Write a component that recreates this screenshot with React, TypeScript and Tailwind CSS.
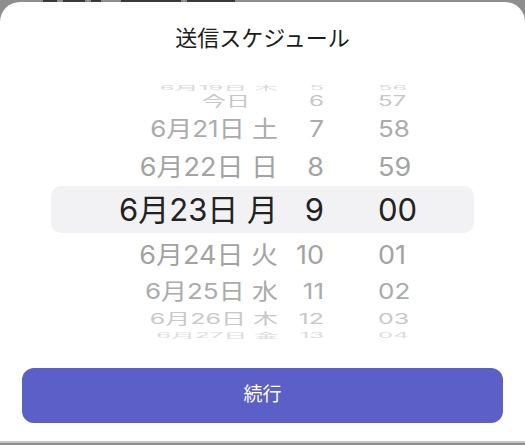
import React from 'react';

type Row = {
  date: string;
  hour: string;
  min: string;
  row: string;
  squash: string;
  datePad?: string;
};

const ROWS: Row[] = [
  { date: '6月19日 木', hour: '5', min: '56', row: 'h-[9px] text-[24px] text-[#dadada]', squash: 'scale-y-[0.25]' },
  { date: '今日', hour: '6', min: '57', row: 'h-[18px] text-[24px] text-[#c6c6c6]', squash: 'scale-y-[0.58]', datePad: 'pr-[28px]' },
  { date: '6月21日 土', hour: '7', min: '58', row: 'h-[38px] text-[26px] text-[#ababab]', squash: 'scale-y-[0.88]' },
  { date: '6月22日 日', hour: '8', min: '59', row: 'h-[38px] text-[27px] text-[#a3a3a3]', squash: 'scale-y-[0.93]' },
  { date: '6月23日 月', hour: '9', min: '00', row: 'h-[47px] text-[31px] text-[#222222] bg-[#f2f2f4] rounded-[10px]', squash: '' },
  { date: '6月24日 火', hour: '10', min: '01', row: 'h-[44px] text-[27px] text-[#a3a3a3]', squash: 'scale-y-[0.93]' },
  { date: '6月25日 水', hour: '11', min: '02', row: 'h-[28px] text-[26px] text-[#ababab]', squash: 'scale-y-[0.84]' },
  { date: '6月26日 木', hour: '12', min: '03', row: 'h-[26px] text-[25px] text-[#c8c8c8]', squash: 'scale-y-[0.6]' },
  { date: '6月27日 金', hour: '13', min: '04', row: 'h-[10px] text-[24px] text-[#dcdcdc]', squash: 'scale-y-[0.3]' },
];

function WheelRow({ r }: { r: Row }) {
  return (
    <div className={`mx-[51px] flex items-center overflow-hidden leading-none ${r.row}`}>
      <div className={`flex w-full items-center ${r.squash}`}>
        <span className={`w-[227px] text-right whitespace-pre ${r.datePad ?? ''}`}>{r.date}</span>
        <span className="w-[46px] text-right">{r.hour}</span>
        <span className="pl-[54px]">{r.min}</span>
      </div>
    </div>
  );
}

export default function App() {
  return (
    <div
      className="relative h-[445px] w-[525px] overflow-hidden bg-[#8e8e8e] pt-[2px]"
      style={{ fontFamily: 'Inter, "Noto Sans CJK JP", sans-serif' }}
    >
      {/* sliver of the page behind the sheet */}
      <div className="absolute left-[43px] top-0 flex gap-[6px]">
        <div className="h-[3px] w-[14px] bg-[#3a3a3a]" />
        <div className="h-[3px] w-[22px] bg-[#3a3a3a]" />
        <div className="h-[3px] w-[10px] bg-[#3a3a3a]" />
        <div className="ml-[14px] h-[3px] w-[60px] bg-[#3a3a3a]" />
        <div className="h-[3px] w-[48px] bg-[#3a3a3a]" />
      </div>

      <div className="relative flex h-[441px] flex-col rounded-t-[20px] border-b-2 border-[#c6c6c6] bg-white">
        <h1 className="pt-[21px] text-center text-[22px] leading-[30px] text-[#1c1c1c]">送信スケジュール</h1>

        <div className="mt-[30px] flex flex-col">
          {ROWS.map((r) => (
            <WheelRow key={r.date} r={r} />
          ))}
        </div>

        <button
          type="button"
          className="mx-[22px] mt-[27px] h-[55px] rounded-[12px] bg-[#5b5fc7] text-[19px] text-white"
        >
          続行
        </button>
      </div>
    </div>
  );
}
